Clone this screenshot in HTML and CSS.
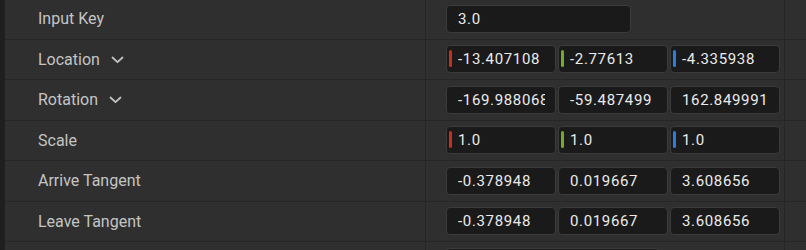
FILE: index.html
```html
<!DOCTYPE html>
<html>
<head>
	<meta charset="utf-8">
	<meta name="viewport" content="width=device-width, initial-scale=1">
	<title>Spline Point</title>
	<link rel="stylesheet" href="styles.css">
</head>
<body>

    <div class="panel">
        <div class="row">
            <div class="label">Input Key</div>
            <div class="value">
                <div class="field key"><span class="text">3.0</span></div>
            </div>
            <div class="rest"></div>
        </div>

        <div class="row">
            <div class="label">Location <span class="chevron"><svg width="13" height="8" viewBox="0 0 13 8"><path d="M1.5 1.5 L6.5 6.2 L11.5 1.5" fill="none" stroke="#c2c2c2" stroke-width="1.8" stroke-linecap="round" stroke-linejoin="round"/></svg></span></div>
            <div class="value">
                <div class="field x"><span class="text">-13.407108</span></div>
                <div class="field y"><span class="text">-2.77613</span></div>
                <div class="field z"><span class="text">-4.335938</span></div>
            </div>
            <div class="rest"></div>
        </div>

        <div class="row">
            <div class="label">Rotation <span class="chevron"><svg width="13" height="8" viewBox="0 0 13 8"><path d="M1.5 1.5 L6.5 6.2 L11.5 1.5" fill="none" stroke="#c2c2c2" stroke-width="1.8" stroke-linecap="round" stroke-linejoin="round"/></svg></span></div>
            <div class="value">
                <div class="field"><span class="text">-169.988068</span></div>
                <div class="field"><span class="text">-59.487499</span></div>
                <div class="field"><span class="text">162.849991</span></div>
            </div>
            <div class="rest"></div>
        </div>

        <div class="row">
            <div class="label">Scale</div>
            <div class="value">
                <div class="field x"><span class="text">1.0</span></div>
                <div class="field y"><span class="text">1.0</span></div>
                <div class="field z"><span class="text">1.0</span></div>
            </div>
            <div class="rest"></div>
        </div>

        <div class="row">
            <div class="label">Arrive Tangent</div>
            <div class="value">
                <div class="field"><span class="text">-0.378948</span></div>
                <div class="field"><span class="text">0.019667</span></div>
                <div class="field"><span class="text">3.608656</span></div>
            </div>
            <div class="rest"></div>
        </div>

        <div class="row">
            <div class="label">Leave Tangent</div>
            <div class="value">
                <div class="field"><span class="text">-0.378948</span></div>
                <div class="field"><span class="text">0.019667</span></div>
                <div class="field"><span class="text">3.608656</span></div>
            </div>
            <div class="rest"></div>
        </div>

        <div class="row">
            <div class="label"></div>
            <div class="value">
                <div class="field type"></div>
            </div>
            <div class="rest"></div>
        </div>
    </div>

</body>
</html>
```

FILE: styles.css
```css
body {
    margin: 0;
    background-color: #2f2f2f;
    font-family: Roboto, "Liberation Sans", sans-serif;
    overflow: hidden;
}

.panel {
    margin-top: -1px;
    border-left: 5px solid #1f1f1f;
    height: 300px;
}

.row {
    display: grid;
    grid-template-columns: 421px 359px 1fr;
    height: 40.5px;
    box-sizing: border-box;
    border-bottom: 1px solid #262626;
}

.label {
    display: flex;
    align-items: center;
    padding-left: 33px;
    border-right: 1px solid #262626;
    color: #c4c4c4;
    font-size: 16px;
}

.chevron {
    display: flex;
    margin-left: 11px;
    margin-top: 1px;
}

.value {
    display: flex;
    align-items: center;
    gap: 2px;
    padding-left: 20px;
    border-right: 1px solid #262626;
}

.field {
    position: relative;
    width: 110px;
    height: 28px;
    box-sizing: border-box;
    padding-left: 11px;
    background-color: #1a1a1a;
    border: 1px solid #3b3b3b;
    border-radius: 4px;
    color: #ebebeb;
    font-size: 15px;
    letter-spacing: 0.65px;
    line-height: 26px;
}

.field .text {
    display: block;
    margin-right: 10px;
    white-space: nowrap;
    overflow: hidden;
}

.field.key {
    width: 185px;
}

.field.type {
    width: 214px;
}

.field.x::before,
.field.y::before,
.field.z::before {
    content: "";
    position: absolute;
    left: 2px;
    top: 4px;
    width: 3px;
    height: 17px;
    border-radius: 2px;
}

.field.x::before {
    background-color: #c9301c;
}

.field.y::before {
    background-color: #73ab2c;
}

.field.z::before {
    background-color: #2b7ede;
}
```
